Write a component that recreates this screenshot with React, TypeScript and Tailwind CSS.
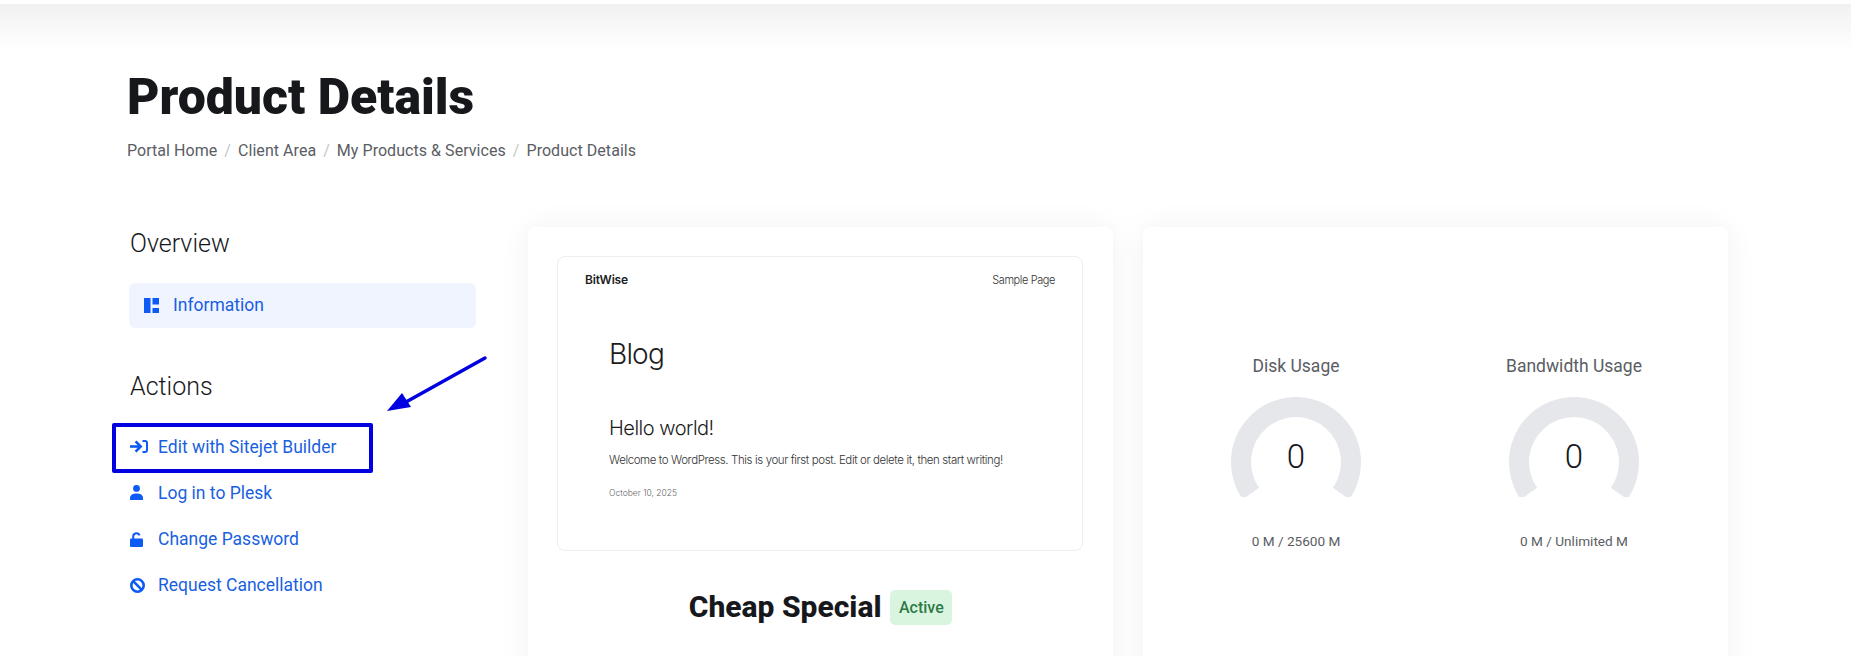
const roboto = "font-['Roboto',sans-serif]";

function Gauge({ title, usage }: { title: string; usage: string }) {
  return (
    <div className="flex w-[200px] flex-col items-center">
      <div className="text-[17.5px] leading-[22px] text-[#5a5d63]">{title}</div>
      <div className="relative mt-[20px] h-[100px] w-[130px]">
        <svg width="130" height="100" viewBox="0 0 130 100">
          <path
            d="M11.8 102.3 A65 65 0 1 1 118.2 102.3 L101.9 90.8 A45 45 0 1 0 28.1 90.8 Z"
            fill="#e5e7eb"
          />
        </svg>
        <div className="absolute inset-x-0 top-[39px] text-center text-[33px] leading-[42px] font-light text-[#16181c]">
          0
        </div>
      </div>
      <div className="mt-[35px] text-[13.6px] leading-[18px] text-[#5a5d63]">{usage}</div>
    </div>
  );
}

function Sep() {
  return <span className="mx-[7px] text-[#c4c6ca]">/</span>;
}

function ActionLink({ icon, label }: { icon: React.ReactNode; label: string }) {
  return (
    <div className="flex h-[46.3px] items-center text-[17.5px] text-[#1a5fe0]">
      <span className="flex w-[29px] items-center pl-[1px] text-[#0d5bf5]">{icon}</span>
      <span>{label}</span>
    </div>
  );
}

export default function App() {
  return (
    <div className={`relative h-[656px] w-[1851px] overflow-hidden bg-white ${roboto}`}>
      <div className="h-[4px] bg-white" />
      <div className="h-[46px] bg-linear-to-b from-[#f1f1f1] to-white" />

      <div className="pl-[127px]">
        <h1 className="mt-[17px] text-[50px] leading-[60px] font-black text-[#16181c]">Product Details</h1>
        <div className="mt-[12px] flex text-[16px] leading-[24px] tracking-[0.05px] text-[#5a5d63]">
          <span>Portal Home</span>
          <Sep />
          <span>Client Area</span>
          <Sep />
          <span>My Products &amp; Services</span>
          <Sep />
          <span>Product Details</span>
        </div>

        <div className="mt-[64px] flex">
          <aside className="w-[401px] shrink-0">
            <div className="pt-[2px] pl-[3px] text-[25px] leading-[30px] font-light text-[#16181c]">Overview</div>
            <div className="mt-[24px] ml-[2px] flex h-[45px] w-[347px] items-center rounded-[6px] bg-[#eff4ff] pb-[1px] pl-[15px] text-[17.5px] text-[#1a5fe0]">
              <svg className="mr-[14px]" width="15" height="15" viewBox="0 0 15 15" fill="#0d5bf5">
                <rect x="0" y="0" width="6.5" height="15" />
                <rect x="8.5" y="0" width="6.5" height="6.5" />
                <rect x="8.5" y="10" width="6.5" height="5" />
              </svg>
              Information
            </div>
            <div className="mt-[44px] pl-[3px] text-[25px] leading-[30px] font-light text-[#16181c]">Actions</div>
            <div className="mt-[21.5px] pl-[2px]">
              <ActionLink
                icon={
                  <svg width="18" height="13" viewBox="0 0 18 13" fill="none" stroke="#0d5bf5">
                    <path d="M0 6.5 H9.5" strokeWidth="2.6" />
                    <path d="M5.6 1.4 L10.7 6.5 L5.6 11.6" strokeWidth="2.6" />
                    <path d="M12.5 1 H15 A2 2 0 0 1 17 3 V10 A2 2 0 0 1 15 12 H12.5" strokeWidth="2" />
                  </svg>
                }
                label="Edit with Sitejet Builder"
              />
              <ActionLink
                icon={
                  <svg width="13" height="15" viewBox="0 0 13 15" fill="#0d5bf5">
                    <circle cx="6.5" cy="3.4" r="3.4" />
                    <path d="M0 15 V13.2 C0 10 3 8.6 6.5 8.6 S13 10 13 13.2 V15 Z" />
                  </svg>
                }
                label="Log in to Plesk"
              />
              <ActionLink
                icon={
                  <svg width="13" height="15" viewBox="0 0 13 15">
                    <rect x="0" y="6.5" width="13" height="8.5" rx="1" fill="#0d5bf5" />
                    <path d="M3.2 7 V4.2 A3.3 3.3 0 0 1 9.6 3.4" stroke="#0d5bf5" strokeWidth="2" fill="none" />
                  </svg>
                }
                label="Change Password"
              />
              <ActionLink
                icon={
                  <svg width="15" height="15" viewBox="0 0 15 15" fill="none" stroke="#0d5bf5" strokeWidth="2.6">
                    <circle cx="7.5" cy="7.5" r="6.2" />
                    <path d="M3.2 3.2 L11.8 11.8" />
                  </svg>
                }
                label="Request Cancellation"
              />
            </div>
          </aside>

          <section className="h-[500px] w-[585px] shrink-0 rounded-[8px] bg-white px-[29px] pt-[29px] shadow-[0_0_30px_rgba(0,0,0,0.06)]">
            <div className="h-[295px] w-[526px] rounded-[8px] border border-[#eeeef0] px-[27px] pt-[15px] font-['Inter',sans-serif] text-[#1c1c1c]">
              <div className="flex items-center justify-between">
                <span className="text-[12px] leading-[16px] font-semibold tracking-[-0.2px]">BitWise</span>
                <span className="text-[11px] leading-[16px] font-light tracking-[-0.4px] text-[#333]">Sample Page</span>
              </div>
              <div className="mt-[49px] pl-[24px]">
                <div className="text-[28px] leading-[34px] font-light tracking-[-0.8px]">Blog</div>
                <div className="mt-[44px] text-[20px] leading-[26px] font-light tracking-[-0.5px]">Hello world!</div>
                <div className="mt-[11px] text-[11.5px] leading-[16px] font-light tracking-[-0.4px] text-[#333]">
                  Welcome to WordPress. This is your first post. Edit or delete it, then start writing!
                </div>
                <div className="mt-[19px] text-[8.5px] leading-[12px] font-light text-[#666]">October 10, 2025</div>
              </div>
            </div>
            <div className="mt-[38px] flex items-center justify-center">
              <span className="text-[30px] leading-[36px] font-extrabold text-[#16181c]">Cheap Special</span>
              <span className="ml-[9px] rounded-[5px] bg-[#d9f5df] px-[8.5px] py-[6px] text-[16px] leading-[23px] font-medium text-[#2d7a46]">
                Active
              </span>
            </div>
          </section>

          <section className="ml-[30px] h-[500px] w-[585px] shrink-0 rounded-[8px] bg-white pt-[128px] shadow-[0_0_30px_rgba(0,0,0,0.06)]">
            <div className="flex">
              <div className="ml-[53px]">
                <Gauge title="Disk Usage" usage="0 M / 25600 M" />
              </div>
              <div className="ml-[78px]">
                <Gauge title="Bandwidth Usage" usage="0 M / Unlimited M" />
              </div>
            </div>
          </section>
        </div>
      </div>

      {/* Annotation drawn over the page */}
      <div className="absolute top-[423px] left-[112px] h-[50px] w-[261px] rounded-[2px] border-[4px] border-[#0000e0]" />
      <svg className="absolute top-[350px] left-[380px]" width="112" height="66" viewBox="0 0 112 66">
        <path d="M105 8 L26 52" stroke="#0000e0" strokeWidth="3.5" strokeLinecap="round" fill="none" />
        <path d="M7 61 L22 43 L31 57 Z" fill="#0000e0" />
      </svg>
    </div>
  );
}
